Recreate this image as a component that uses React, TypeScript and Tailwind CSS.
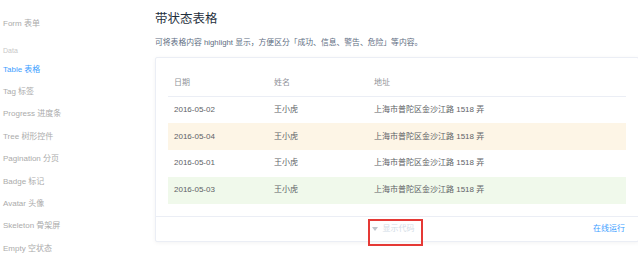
const FONT = { fontFamily: '"Liberation Sans", "Noto Sans CJK SC", sans-serif' }

const NAV_TOP = ['Form 表单']
const NAV_DATA = [
  'Table 表格',
  'Tag 标签',
  'Progress 进度条',
  'Tree 树形控件',
  'Pagination 分页',
  'Badge 标记',
  'Avatar 头像',
  'Skeleton 骨架屏',
  'Empty 空状态',
]

const ROWS = [
  { date: '2016-05-02', name: '王小虎', address: '上海市普陀区金沙江路 1518 弄', tone: '' },
  { date: '2016-05-04', name: '王小虎', address: '上海市普陀区金沙江路 1518 弄', tone: 'bg-[#fdf5e6]' },
  { date: '2016-05-01', name: '王小虎', address: '上海市普陀区金沙江路 1518 弄', tone: '' },
  { date: '2016-05-03', name: '王小虎', address: '上海市普陀区金沙江路 1518 弄', tone: 'bg-[#f0f9eb]' },
]

function Sidebar() {
  return (
    <div className="w-[155px] shrink-0 pt-[13px] pl-[3px]">
      {NAV_TOP.map((item) => (
        <div key={item} className="h-[22.4px] flex items-center text-[8px] text-[#ababab]">
          {item}
        </div>
      ))}
      <div className="mt-[8px] h-[15px] flex items-center text-[7px] text-[#c8c8c8]">Data</div>
      {NAV_DATA.map((item, i) => (
        <div
          key={item}
          className={`h-[22.4px] flex items-center text-[8px] ${i === 0 ? 'text-[#409eff]' : 'text-[#ababab]'}`}
        >
          {item}
        </div>
      ))}
    </div>
  )
}

function DemoCard() {
  return (
    <div className="w-[484px] border border-[#ebeef5] rounded-[2px] shadow-[0_1px_4px_rgba(0,0,0,0.05)] bg-white">
      {/* Table */}
      <div className="p-[12px]">
        <div className="grid grid-cols-[100px_100px_1fr] h-[26.5px] items-center border-b border-[#ebeef5] text-[8px] text-[#909399]">
          <div className="px-[6px]">日期</div>
          <div className="px-[6px]">姓名</div>
          <div className="px-[6px]">地址</div>
        </div>
        {ROWS.map((row) => (
          <div
            key={row.date}
            className={`grid grid-cols-[100px_100px_1fr] h-[26.8px] items-center text-[8px] text-[#606266] ${row.tone}`}
          >
            <div className="px-[6px]">{row.date}</div>
            <div className="px-[6px]">{row.name}</div>
            <div className="px-[6px]">{row.address}</div>
          </div>
        ))}
      </div>

      {/* Footer */}
      <div className="relative h-[25px] border-t border-[#ebeef5] flex items-center justify-center">
        <div className="flex items-center gap-[5px] text-[8px] text-[#d3dce6] ml-[-8px]">
          <svg width="6" height="4" viewBox="0 0 6 4">
            <path d="M0 0 L6 0 L3 4 Z" fill="#c0c4cc" />
          </svg>
          <span>显示代码</span>
        </div>
        <span className="absolute right-[13px] text-[8px] text-[#409eff]">在线运行</span>
        <div className="absolute top-[2px] left-[212px] w-[55px] h-[27px] border-2 border-[#e53935]" />
      </div>
    </div>
  )
}

export default function App() {
  return (
    <div className="w-[638px] h-[262px] overflow-hidden bg-white flex" style={FONT}>
      <Sidebar />
      <div className="flex-1 min-w-0">
        <h3 className="mt-[9px] h-[20px] leading-[20px] text-[12.5px] text-[#1f2f3d]">带状态表格</h3>
        <p className="mt-[8px] h-[12px] leading-[12px] text-[7.8px] text-[#5e6d82]">
          可将表格内容 highlight 显示，方便区分「成功、信息、警告、危险」等内容。
        </p>
        <div className="mt-[8px]">
          <DemoCard />
        </div>
      </div>
    </div>
  )
}
